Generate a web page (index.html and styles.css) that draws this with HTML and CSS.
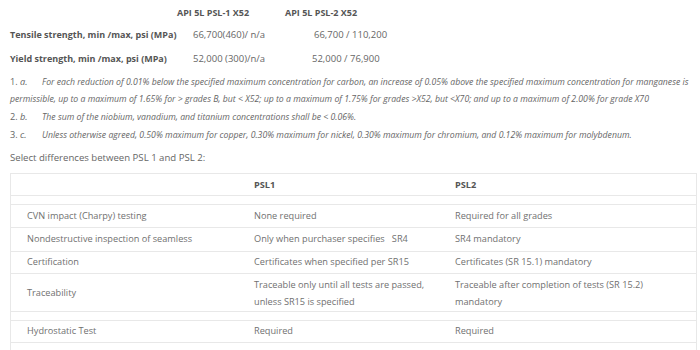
FILE: index.html
```html
<!DOCTYPE html>
<html>
<head>
<meta charset="utf-8">
<link rel="stylesheet" href="styles.css">
</head>
<body>
<div class="spec">
  <div class="cell"></div>
  <div class="cell head">API 5L PSL-1 X52</div>
  <div class="cell head">API 5L PSL-2 X52</div>
  <div class="cell label">Tensile strength, min /max, psi (MPa)</div>
  <div class="cell val v1">66,700(460)/ n/a</div>
  <div class="cell val v2">66,700 / 110,200</div>
  <div class="cell label">Yield strength, min /max, psi (MPa)</div>
  <div class="cell val v1">52,000 (300)/n/a</div>
  <div class="cell val v2b">52,000 / 76,900</div>
</div>
<div class="notes">
  <p class="note"><span class="num">1.&nbsp;<em>a.</em></span><em>For each reduction of 0.01% below the specified maximum concentration for carbon, an increase of 0.05% above the specified maximum concentration for manganese is permissible, up to a maximum of 1.65% for &gt; grades B, but &lt; X52; up to a maximum of 1.75% for grades &gt;X52, but &lt;X70; and up to a maximum of 2.00% for grade X70</em></p>
  <p class="note"><span class="num">2.&nbsp;<em>b.</em></span><em>The sum of the niobium, vanadium, and titanium concentrations shall be &lt; 0.06%.</em></p>
  <p class="note"><span class="num">3.&nbsp;<em>c.</em></span><em>Unless otherwise agreed, 0.50% maximum for copper, 0.30% maximum for nickel, 0.30% maximum for chromium, and 0.12% maximum for molybdenum.</em></p>
</div>
<p class="intro">Select differences between PSL 1 and PSL 2:</p>
<div class="diff">
  <div class="row hrow"><div></div><div class="th">PSL1</div><div class="th">PSL2</div></div>
  <div class="row spacer"></div>
  <div class="row r23"><div>CVN impact (Charpy) testing</div><div>None required</div><div>Required for all grades</div></div>
  <div class="row r24"><div>Nondestructive inspection of seamless</div><div>Only when purchaser specifies&nbsp;&nbsp; SR4</div><div>SR4 mandatory</div></div>
  <div class="row r22"><div>Certification</div><div>Certificates when specified per SR15</div><div>Certificates (SR 15.1) mandatory</div></div>
  <div class="row tall"><div>Traceability</div><div>Traceable only until all tests are passed, unless SR15 is specified</div><div>Traceable after completion of tests (SR 15.2) mandatory</div></div>
  <div class="row spacer"></div>
  <div class="row r22"><div>Hydrostatic Test</div><div>Required</div><div>Required</div></div>
  <div class="row r22"></div>
</div>
</body>
</html>
```
FILE: styles.css
```css
html, body {
  margin: 0;
  padding: 0;
  background: #fff;
}
body {
  font-family: "Open Sans", "Liberation Sans", sans-serif;
  font-size: 9.3px;
  color: #666;
  padding: 0 3px 0 10px;
  overflow: hidden;
  height: 350px;
}
.spec {
  display: grid;
  grid-template-columns: 167px 108px 1fr;
  grid-template-rows: 26px 18px 30px;
  align-items: center;
}
.cell {
  line-height: 16px;
  white-space: nowrap;
}
.head, .label {
  font-weight: 700;
  font-size: 9px;
  color: #555;
}
.val {
  font-size: 9.5px;
}
.v1 {
  padding-left: 16px;
}
.v2 {
  padding-left: 29px;
}
.v2b {
  padding-left: 27px;
}
.notes {
  margin-top: -1px;
}
.note {
  margin: 0;
  line-height: 17px;
  font-size: 8.7px;
}
.num {
  display: inline-block;
  width: 32px;
  font-size: 9.2px;
}
.intro {
  margin: 5px 0 0;
  line-height: 17px;
  font-size: 9.6px;
}
.diff {
  margin-top: 7px;
  width: 685px;
  border: 1px solid #e8e8e8;
  border-bottom: none;
  font-size: 9.2px;
  color: #707070;
}
.row {
  display: grid;
  grid-template-columns: 227px 201px 1fr;
  align-items: center;
  border-bottom: 1px solid #e8e8e8;
  box-sizing: border-box;
  line-height: 16.5px;
}
.row > div {
  padding-left: 16px;
}
.hrow {
  height: 22px;
  padding-top: 2px;
}
.th {
  font-weight: 700;
  color: #555;
}
.spacer {
  height: 9px;
}
.r22 { height: 22px; }
.r23 { height: 23px; }
.r24 { height: 24px; }
.tall {
  height: 38px;
  padding-top: 2px;
}
.tall > div:nth-child(2) {
  padding-right: 6px;
}
.tall > div:nth-child(3) {
  padding-right: 50px;
}
```
